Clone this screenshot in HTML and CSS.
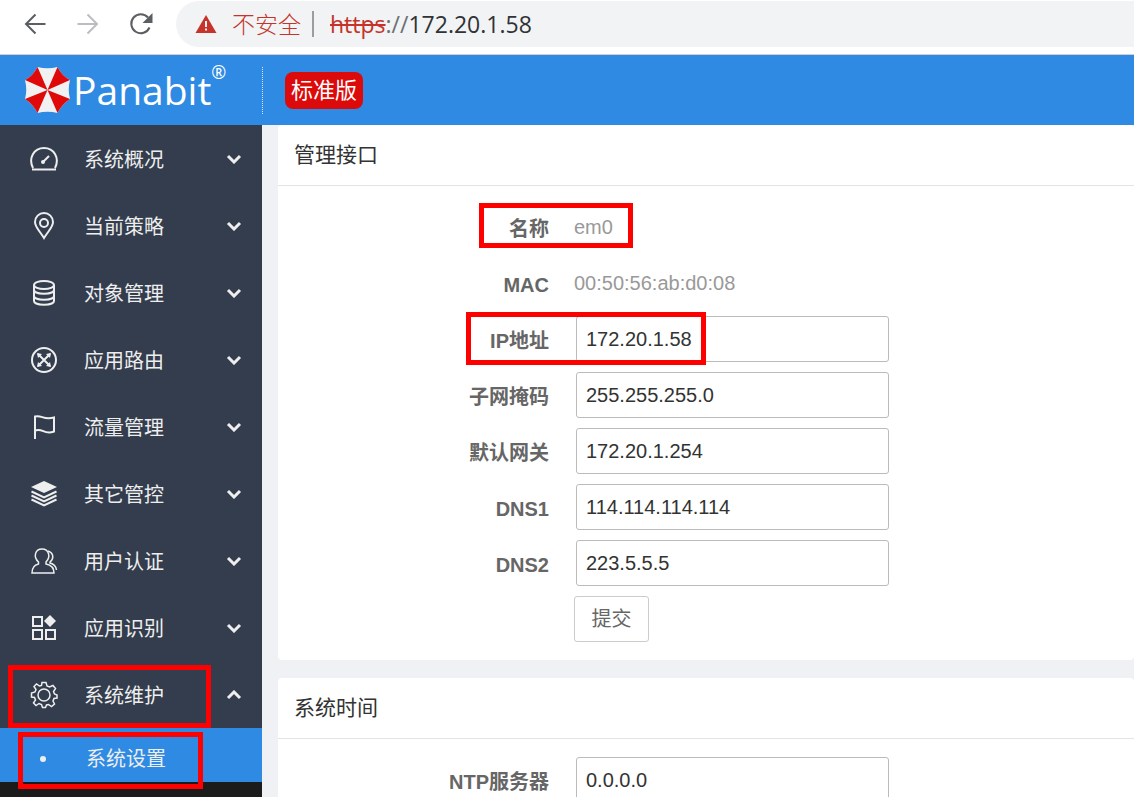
FILE: index.html
```html
<!DOCTYPE html>
<html lang="zh-CN">
<head>
    <meta charset="UTF-8">
    <meta name="viewport" content="width=device-width, initial-scale=1.0">
    <title>Panabit</title>
    <link rel="stylesheet" href="styles.css">
</head>
<body>
    <div class="browser">
        <button class="nav-btn" aria-label="后退">
            <svg width="24" height="24" viewBox="0 0 24 24"><path d="M22.500 12H3M12.500 2.500L3 12l9.500 9.500"/></svg>
        </button>
        <button class="nav-btn off" aria-label="前进">
            <svg width="24" height="24" viewBox="0 0 24 24"><path d="M1.500 12H21M11.500 2.500L21 12l-9.500 9.500"/></svg>
        </button>
        <button class="nav-btn" aria-label="刷新">
            <svg width="24" height="24" viewBox="0 0 24 24"><path d="M20.500 15.500A9.500 9.500 0 1 1 19 5.500"/><path class="solid" d="M23.500 1v10h-10z"/></svg>
        </button>
        <div class="address">
            <svg width="22" height="20" viewBox="0 0 22 20"><path fill="#c5332a" d="M11 1l10.500 18H.5z"/><path fill="#f1f3f4" d="M10 7h2v6h-2zM10 14.500h2v2h-2z"/></svg>
            <span class="unsafe">不安全</span>
            <span class="url"><s>https</s><i>://</i>172.20.1.58</span>
        </div>
    </div>

    <header>
        <div class="logo">
            <svg width="47" height="48" viewBox="0 0 47 48">
                <path fill="#f1f1f1" d="M13.500 1Q23.500 3.500 33.500 1Q38 10 46 14Q43.500 24 46 33Q38 38 33.500 47Q23.500 44.500 13.500 47Q9 38 1 33Q3.500 24 1 14Q9 10 13.500 1z"/>
                <g fill="#df0909">
                    <path d="M23.500 24L13.500 1Q9 10 1 14z"/>
                    <path d="M23.500 24L33.500 1Q38 10 46 14z"/>
                    <path d="M23.500 24L46 33Q38 38 33.500 47z"/>
                    <path d="M23.500 24L13.500 47Q9 38 1 33z"/>
                </g>
            </svg>
            <span class="brand">Panabit</span><span class="reg">®</span>
        </div>
        <span class="edition">标准版</span>
    </header>

    <div class="page">
        <nav class="sidebar">
            <button class="item">
                <svg class="icon" viewBox="0 0 28 28"><path d="M3 23C-2 13 4 3 14 3s16 10 11 20M2 24.500h24"/><path d="M13 17l6-6"/><circle class="solid" cx="13" cy="17" r="2"/></svg>
                <span>系统概况</span>
                <svg class="arrow" viewBox="0 0 16 10"><path d="M2 2l6 6 6-6"/></svg>
            </button>
            <button class="item">
                <svg class="icon" viewBox="0 0 28 28"><path d="M14 26C9 18 5 15 5 10a9 9 0 0 1 18 0c0 5-4 8-9 16z"/><circle cx="14" cy="11" r="4"/></svg>
                <span>当前策略</span>
                <svg class="arrow" viewBox="0 0 16 10"><path d="M2 2l6 6 6-6"/></svg>
            </button>
            <button class="item">
                <svg class="icon" viewBox="0 0 28 28"><ellipse cx="14" cy="6" rx="10" ry="4"/><path d="M4 6v16c0 5 20 5 20 0V6M4 11c0 5 20 5 20 0M4 17c0 5 20 5 20 0"/></svg>
                <span>对象管理</span>
                <svg class="arrow" viewBox="0 0 16 10"><path d="M2 2l6 6 6-6"/></svg>
            </button>
            <button class="item">
                <svg class="icon" viewBox="0 0 28 28"><circle cx="14" cy="14" r="12"/><path d="M8 8l12 12M20 8L8 20"/><path class="solid" d="M7 7l5 1-4 4zM21 7l-5 1 4 4zM7 21l5-1-4-4zM21 21l-5-1 4-4z"/></svg>
                <span>应用路由</span>
                <svg class="arrow" viewBox="0 0 16 10"><path d="M2 2l6 6 6-6"/></svg>
            </button>
            <button class="item">
                <svg class="icon" viewBox="0 0 28 28"><path d="M5 26V3.500c7-2 8 4 19 1v14c-10 4-11-4-19-1"/></svg>
                <span>流量管理</span>
                <svg class="arrow" viewBox="0 0 16 10"><path d="M2 2l6 6 6-6"/></svg>
            </button>
            <button class="item">
                <svg class="icon" viewBox="0 0 28 28"><path class="solid" d="M14 1l13 6-13 6-13-6z"/><path d="M1.500 11.500L14 17.500l12.500-6M1.500 15.500L14 21.500l12.500-6M1.500 19.500L14 25.500l12.500-6"/></svg>
                <span>其它管控</span>
                <svg class="arrow" viewBox="0 0 16 10"><path d="M2 2l6 6 6-6"/></svg>
            </button>
            <button class="item">
                <svg class="icon thin" viewBox="0 0 28 28"><path d="M8.500 17v-2C3 10 5 2 12 2s9 8 4 13v2c5 1 8 4 8 9H2c0-5 2-8 6.500-9z"/><path d="M18 4c6 2 6 8 2 11v1c4 1 6 3 6.500 7"/></svg>
                <span>用户认证</span>
                <svg class="arrow" viewBox="0 0 16 10"><path d="M2 2l6 6 6-6"/></svg>
            </button>
            <button class="item">
                <svg class="icon" viewBox="0 0 28 28"><path d="M3 3h9v9H3zM3 16h9v9H3zM16 16h9v9h-9z"/><path class="solid" d="M20 1l6 6-6 6-6-6z"/></svg>
                <span>应用识别</span>
                <svg class="arrow" viewBox="0 0 16 10"><path d="M2 2l6 6 6-6"/></svg>
            </button>
            <button class="item mark mark-menu">
                <svg class="icon thin" viewBox="0 0 28 28"><path d="M12 1.500h4l1 3.500 2.500 1L23 4.500l2.500 3-2 3 1 2.500 2.500 1v3l-3 .5-1 2.500 1.500 3-3 2.500-3-2-2 .5-1 2.500h-3l-1-3-2.500-1-3 2L3.500 22l2-3-1-2.500L1.500 16v-4L5 11l1-2.500L4 5.500 6.500 3l3 2 2-.5z"/><circle cx="14" cy="14" r="6"/></svg>
                <span>系统维护</span>
                <svg class="arrow" viewBox="0 0 16 10"><path d="M2 8l6-6 6 6"/></svg>
            </button>
            <a href="#" class="sub mark mark-sub"><b class="dot"></b><span>系统设置</span></a>
        </nav>

        <main>
            <section class="card">
                <h2>管理接口</h2>
                <form>
                    <div class="row mark mark-name"><span class="label">名称</span><span class="static">em0</span></div>
                    <div class="row"><span class="label">MAC</span><span class="static">00:50:56:ab:d0:08</span></div>
                    <div class="row mark mark-ip"><label class="label" for="ip">IP地址</label><input type="text" id="ip" value="172.20.1.58"></div>
                    <div class="row"><label class="label" for="mask">子网掩码</label><input type="text" id="mask" value="255.255.255.0"></div>
                    <div class="row"><label class="label" for="gateway">默认网关</label><input type="text" id="gateway" value="172.20.1.254"></div>
                    <div class="row"><label class="label" for="dns1">DNS1</label><input type="text" id="dns1" value="114.114.114.114"></div>
                    <div class="row"><label class="label" for="dns2">DNS2</label><input type="text" id="dns2" value="223.5.5.5"></div>
                    <div class="row"><button type="button" class="submit">提交</button></div>
                </form>
            </section>
            <section class="card">
                <h2>系统时间</h2>
                <form>
                    <div class="row"><label class="label" for="ntp">NTP服务器</label><input type="text" id="ntp" value="0.0.0.0"></div>
                </form>
            </section>
        </main>
    </div>
</body>
</html>
```
FILE: styles.css
```css
*, *::after {
    box-sizing: border-box;
}
body {
    margin: 0;
    height: 100vh;
    overflow: hidden;
    display: flex;
    flex-direction: column;
    font-family: "Liberation Sans", "Noto Sans CJK SC", sans-serif;
    font-size: 20px;
    line-height: 24px;
    background-color: #eff1f5;
}
button, input {
    font: inherit;
}
svg {
    flex: none;
}

/* browser bar */
.browser {
    flex: none;
    display: flex;
    align-items: center;
    height: 55px;
    padding: 0 0 7px 23px;
    gap: 29px;
    background-color: #fff;
    border-bottom: 1px solid #cfcfcf;
}
.nav-btn {
    display: flex;
    padding: 0;
    border: 0;
    background: none;
    color: #5b5e63;
}
.nav-btn path {
    fill: none;
    stroke: currentColor;
    stroke-width: 2;
}
.nav-btn .solid {
    fill: currentColor;
    stroke: none;
}
.nav-btn.off {
    color: #bcbdbf;
}
.address {
    flex: 1;
    display: flex;
    align-items: center;
    height: 46px;
    margin-left: -6px;
    padding-left: 19px;
    border-radius: 23px 0 0 23px;
    background-color: #f1f3f4;
    font-family: "Open Sans", "Noto Sans CJK SC", sans-serif;
    font-size: 23px;
    line-height: 26px;
}
.unsafe {
    margin-left: 15px;
    padding-right: 11px;
    border-right: 2px solid #9b9da0;
    color: #c5332a;
    font-weight: 300;
}
.url {
    margin-left: 16px;
    color: #303236;
}
.url s {
    color: #c5332a;
}
.url i {
    font-style: normal;
    color: #6c6f73;
}

/* top bar */
header {
    flex: none;
    display: flex;
    align-items: center;
    height: 70px;
    background-color: #2f8ae3;
    color: #fff;
}
.logo {
    display: flex;
    align-items: center;
    width: 263px;
    height: 47px;
    padding-left: 24px;
    border-right: 1px dotted #d5e7fa;
}
.brand {
    margin-left: 2px;
    font-family: "Open Sans", sans-serif;
    font-size: 39px;
    line-height: 46px;
}
.reg {
    align-self: flex-start;
    margin-top: -4px;
    font-family: "Open Sans", sans-serif;
    font-size: 18px;
    line-height: 18px;
}
.edition {
    margin-left: 22px;
    padding: 0 6px;
    border-radius: 8px;
    background-color: #dc0a0a;
    font-size: 22px;
    line-height: 37px;
}

/* sidebar */
.page {
    flex: 1;
    min-height: 0;
    display: flex;
}
.sidebar {
    flex: none;
    width: 262px;
    background-color: #1b1b1b;
}
.item, .sub {
    display: flex;
    align-items: center;
    width: 100%;
    padding: 0 20px 0 30px;
    border: 0;
    color: #eee;
    text-decoration: none;
}
.item {
    height: 67px;
    background-color: #333d4d;
}
.item span {
    flex: 1;
    margin-left: 26px;
    padding-top: 2px;
    text-align: left;
}
.icon {
    width: 28px;
    height: 28px;
    fill: none;
    stroke: #eee;
    stroke-width: 2;
}
.icon.thin {
    stroke-width: 1.5;
}
.icon .solid {
    fill: #eee;
    stroke: none;
}
.arrow {
    width: 16px;
    height: 10px;
    fill: none;
    stroke: #eee;
    stroke-width: 3;
}
.sub {
    height: 54px;
    padding-top: 8px;
    padding-left: 40px;
    background-color: #2f8ae3;
}
.dot {
    width: 6px;
    height: 6px;
    border-radius: 3px;
    background-color: #eee;
}
.sub span {
    margin-left: 40px;
}

/* content */
main {
    flex: 1;
    padding-left: 16px;
}
.card {
    margin-bottom: 18px;
    border-radius: 4px;
    background-color: #fff;
}
h2 {
    margin: 0;
    padding-left: 16px;
    border-bottom: 1px solid #e4e4e4;
    color: #333;
    font-size: 21px;
    font-weight: normal;
    line-height: 60px;
}
form {
    padding: 13px 0;
}
.row {
    display: flex;
    align-items: center;
    height: 56px;
}
.label {
    width: 271px;
    padding-top: 4px;
    text-align: right;
    font-weight: bold;
    color: #666;
}
.static {
    margin-left: 25px;
    color: #999;
}
input {
    width: 313px;
    height: 46px;
    margin-left: 27px;
    padding: 0 9px;
    border: 1px solid #bbb;
    border-radius: 3px;
    color: #333;
    background-color: #fff;
}
.submit {
    margin-left: 296px;
    width: 75px;
    height: 46px;
    padding: 0;
    border: 1px solid #ccc;
    border-radius: 3px;
    color: #666;
    background-color: #fff;
}

/* red highlight frames */
.mark {
    position: relative;
}
.mark::after {
    content: "";
    position: absolute;
    border: 5px solid #fe0000;
    pointer-events: none;
}
.mark-menu::after {
    left: 8px;
    top: 4px;
    width: 203px;
    height: 63px;
}
.mark-sub::after {
    left: 18px;
    top: 4px;
    width: 185px;
    height: 57px;
}
.mark-name::after {
    left: 201px;
    top: 4px;
    width: 154px;
    height: 45px;
}
.mark-ip::after {
    left: 188px;
    top: 1px;
    width: 240px;
    height: 53px;
}
```
